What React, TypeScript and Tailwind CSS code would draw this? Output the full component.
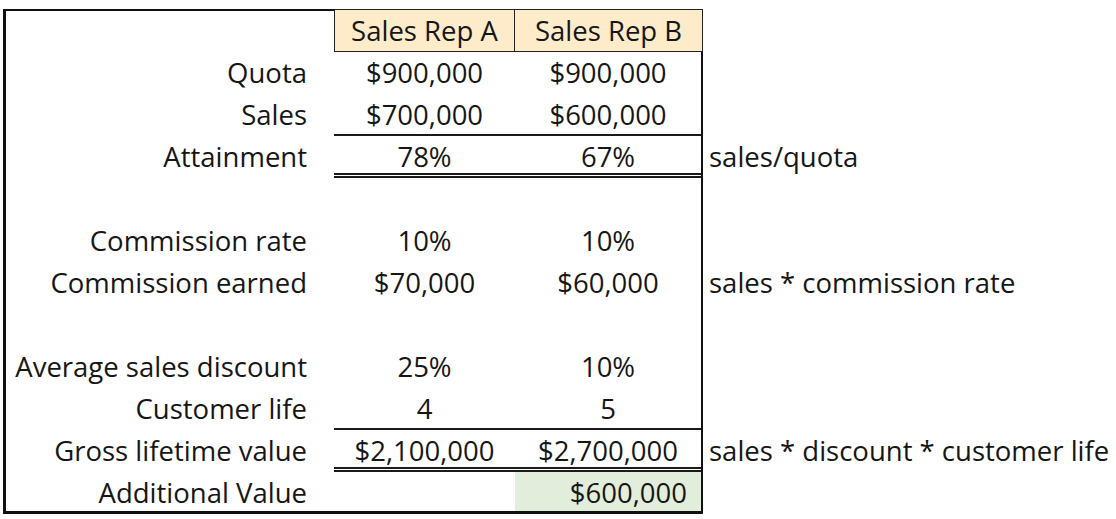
import React from 'react'

type Row = {
  label: string
  a?: string
  b?: string
  note?: string
  line?: 'single' | 'double'
}

const rows: Row[] = [
  { label: 'Quota', a: '$900,000', b: '$900,000' },
  { label: 'Sales', a: '$700,000', b: '$600,000', line: 'single' },
  { label: 'Attainment', a: '78%', b: '67%', note: 'sales/quota', line: 'double' },
  { label: '' },
  { label: 'Commission rate', a: '10%', b: '10%' },
  { label: 'Commission earned', a: '$70,000', b: '$60,000', note: 'sales * commission rate' },
  { label: '' },
  { label: 'Average sales discount', a: '25%', b: '10%' },
  { label: 'Customer life', a: '4', b: '5', line: 'single' },
  {
    label: 'Gross lifetime value',
    a: '$2,100,000',
    b: '$2,700,000',
    note: 'sales * discount * customer life',
    line: 'double',
  },
]

// padding-top equal to the border keeps the text on the same line as the label
const lineClass = (line?: 'single' | 'double') => {
  if (line === 'single') return 'border-b-2 pt-[2px] border-[#1a1a1a]'
  if (line === 'double') return 'border-b-[5px] pt-[5px] border-double border-[#1a1a1a]'
  return ''
}

export default function App() {
  return (
    <div
      className="w-[1116px] h-[519px] bg-white pt-[9px] pl-[3px] text-[#161616] text-[27.5px] leading-none"
      style={{ fontFamily: '"Open Sans", Lato, sans-serif' }}
    >
      {/* header */}
      <div className="flex h-[43px]">
        <div className="w-[331px] border-l-[3px] border-t-[2px] border-[#111]" />
        <div className="w-[181px] flex items-center justify-center bg-[#fdebc9] border border-[#222]">
          Sales Rep A
        </div>
        <div className="w-[188px] flex items-center justify-center bg-[#fdebc9] border border-l-0 border-[#222]">
          Sales Rep B
        </div>
      </div>

      {rows.map((r, i) => (
        <div key={i} className="flex h-[42px]">
          <div className="w-[331px] border-l-[3px] border-[#111] flex items-center justify-end pr-[27px] whitespace-nowrap">
            {r.label}
          </div>
          <div className={`w-[181px] flex items-center justify-center ${lineClass(r.line)}`}>
            {r.a}
          </div>
          <div className="w-[188px] flex border-r-2 border-[#111]">
            <div className={`flex-1 flex items-center justify-center ${lineClass(r.line)}`}>
              {r.b}
            </div>
          </div>
          <div className="flex items-center pl-[6px] whitespace-nowrap">{r.note}</div>
        </div>
      ))}

      {/* last row */}
      <div className="flex h-[42px]">
        <div className="w-[331px] border-l-[3px] border-b-[3px] pt-[3px] border-[#111] flex items-center justify-end pr-[27px]">
          Additional Value
        </div>
        <div className="w-[181px] border-b-[3px] border-[#111]" />
        <div className="w-[188px] flex items-center justify-end pt-[3px] pr-[14px] bg-[#e3eddb] border-r-2 border-b-[3px] border-[#111]">
          $600,000
        </div>
      </div>
    </div>
  )
}
